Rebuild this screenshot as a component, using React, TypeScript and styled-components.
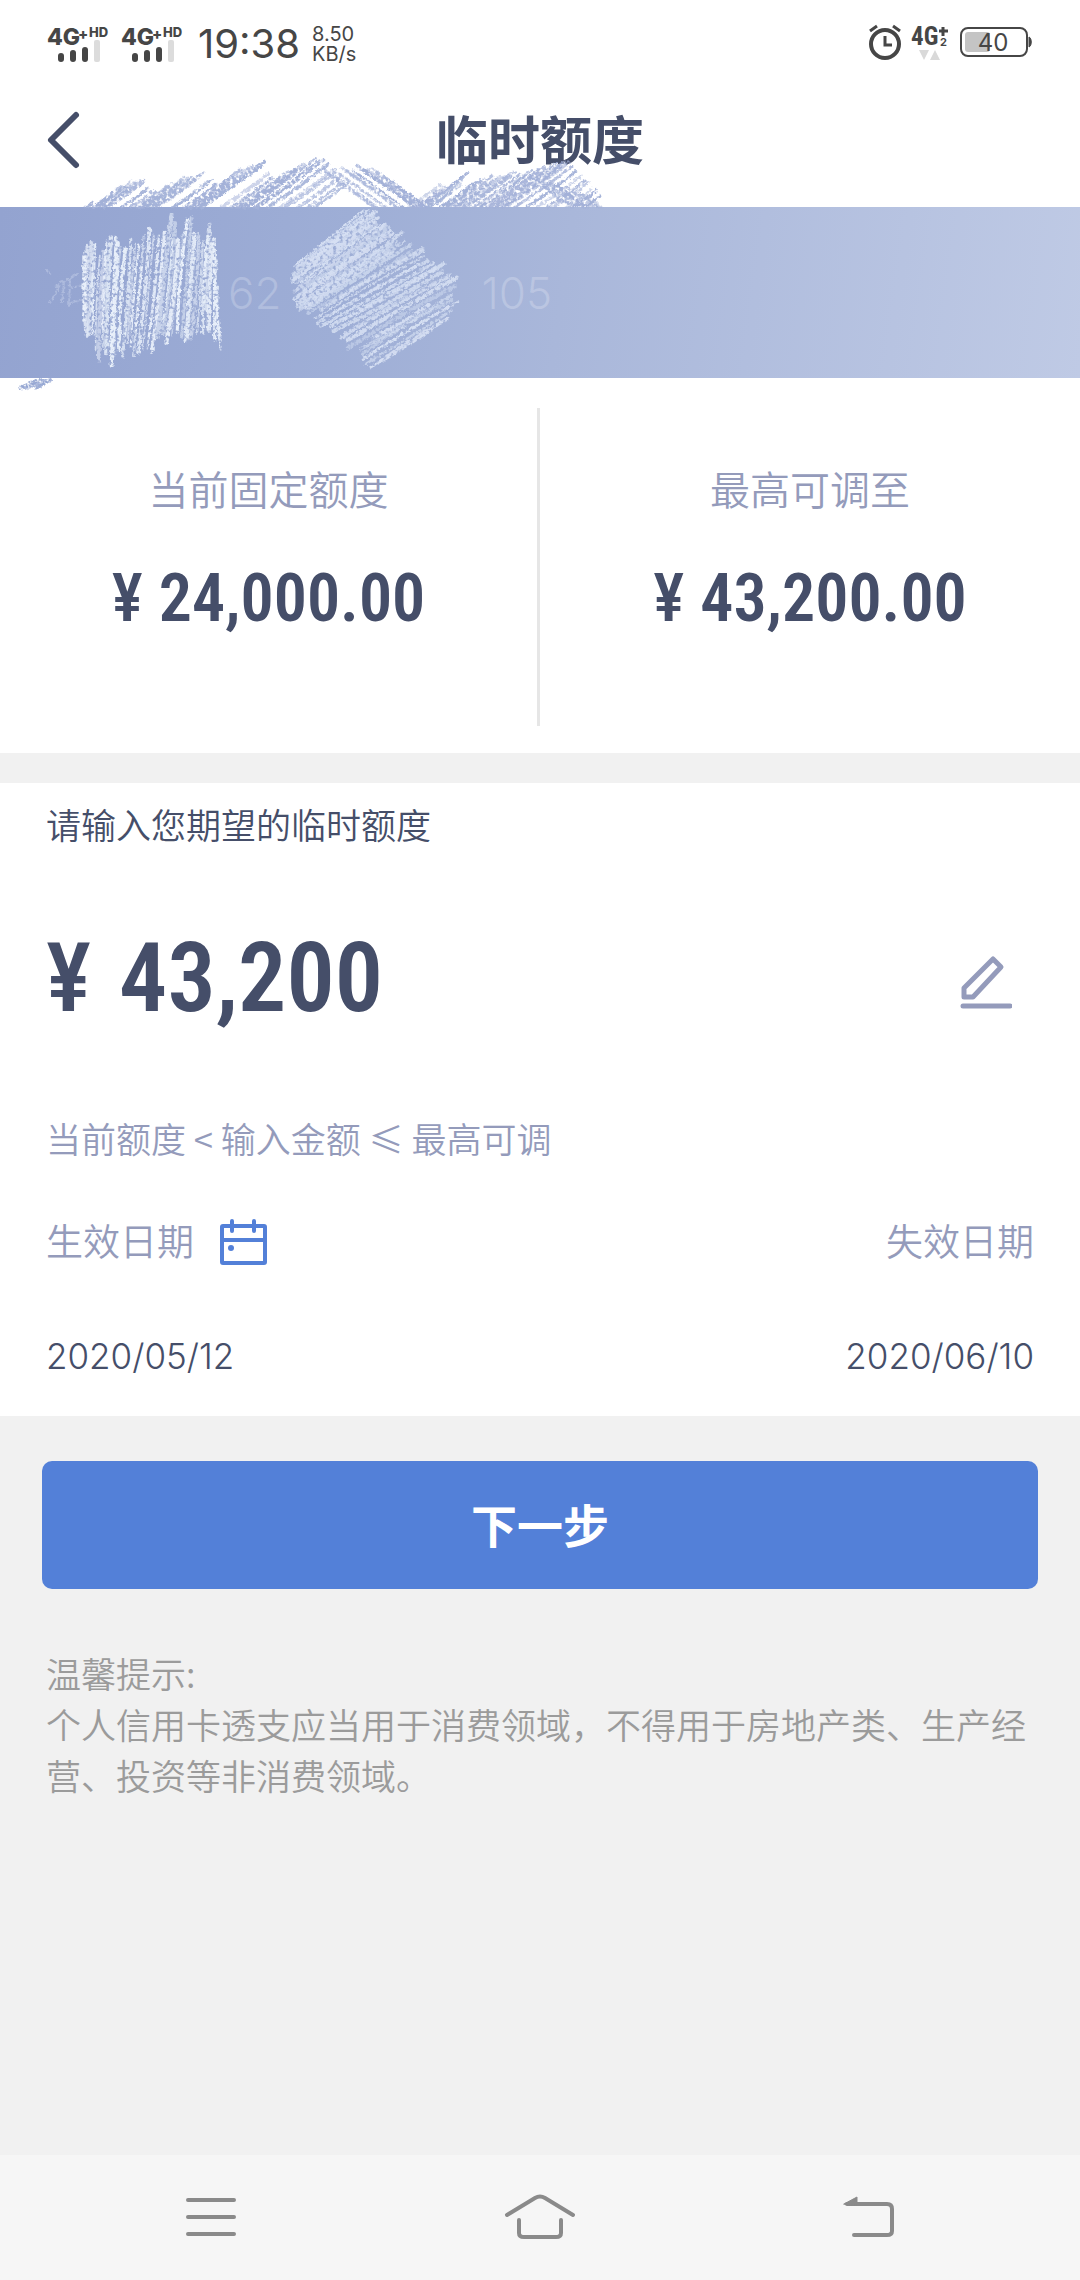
import React from "react";
import styled, { createGlobalStyle } from "styled-components";

const sans = '"Noto Sans CJK SC", sans-serif';
const latin = 'Inter, "Noto Sans CJK SC", sans-serif';
const narrow = '"Liberation Sans Narrow", "Roboto Condensed", "Roboto", sans-serif';

const color = {
  ink: "#454e69",
  mute: "#949bbb",
  blue: "#5380d8",
  status: "#464646",
  page: "#f1f1f1",
  tip: "#9b9b9b",
  nav: "#8a8a8a",
};

const GlobalStyle = createGlobalStyle`
  * { box-sizing: border-box; }
  body { margin: 0; background: ${color.page}; font-family: ${sans}; color: ${color.ink}; }
  h1, p, dl, dt, dd { margin: 0; }
  button { border: 0; padding: 0; background: none; font: inherit; color: inherit; cursor: pointer; }
  svg { display: block; flex: none; }
`;

const Screen = styled.div`
  min-height: 100vh;
  display: flex;
  flex-direction: column;
`;

const StatusBar = styled.div`
  display: flex;
  justify-content: space-between;
  align-items: center;
  height: 84px;
  padding: 4px 48px 0 46px;
  background: #fff;
  color: ${color.status};
  font-family: ${latin};
`;

const StatusGroup = styled.div`
  display: flex;
  align-items: center;
  gap: 8px;
`;

const Clock = styled.span`
  padding: 0 4px;
  font-size: 40px;
  line-height: 48px;
`;

const Speed = styled.span`
  font-size: 20px;
  line-height: 20px;
`;

const Header = styled.header`
  display: grid;
  grid-template-columns: 80px 1fr 80px;
  align-items: center;
  height: 123px;
  padding: 0 40px 12px;
  background: #fff;
`;

const Title = styled.h1`
  padding-bottom: 4px;
  text-align: center;
  font-size: 52px;
  line-height: 64px;
  font-weight: 700;
`;

const Banner = styled.section`
  position: relative;
  display: flex;
  align-items: center;
  height: 171px;
  background: linear-gradient(98deg, #93a3d0 0%, #9eaed6 32%, #a9b7da 52%, #bfcae5 100%);
`;

const Scribbles = styled.svg`
  position: absolute;
  left: 0;
  top: -67px;
  pointer-events: none;
`;

const CardNumber = styled.p`
  display: flex;
  gap: 200px;
  padding-left: 228px;
  font-family: ${latin};
  font-size: 44px;
  line-height: 48px;
  font-weight: 300;
  color: rgba(255, 255, 255, 0.22);
`;

const Limits = styled.dl`
  display: grid;
  grid-template-columns: 1fr 1fr;
  padding: 30px 0 27px;
  background: #fff;
`;

const Limit = styled.div`
  height: 318px;
  padding-top: 50px;
  text-align: center;
  &:first-child { border-right: 3px solid #e6e6e6; }
`;

const LimitLabel = styled.dt`
  font-size: 40px;
  line-height: 60px;
  font-weight: 350;
  color: ${color.mute};
`;

const LimitValue = styled.dd`
  display: flex;
  justify-content: center;
  align-items: center;
  gap: 16px;
  margin-top: 45px;
  font-family: ${narrow};
  font-size: 66px;
  line-height: 72px;
  font-weight: 600;
`;

const Yen = styled.span`
  font-weight: 500;
`;

const Form = styled.section`
  margin-top: 30px;
  padding: 19px 46px 36px;
  background: #fff;
`;

const Prompt = styled.label`
  display: block;
  font-size: 35px;
  line-height: 44px;
  font-weight: 350;
`;

const AmountRow = styled.div`
  display: flex;
  align-items: center;
  justify-content: space-between;
  height: 120px;
  margin-top: 72px;
  padding-right: 22px;
`;

const AmountBox = styled.div`
  display: flex;
  align-items: center;
  gap: 28px;
  flex: 1;
  min-width: 0;
  font-family: ${narrow};
  font-size: 96px;
  line-height: 120px;
`;

const AmountInput = styled.input`
  width: 100%;
  min-width: 0;
  flex: 1;
  height: 120px;
  border: 0;
  padding: 0;
  outline: 0;
  background: none;
  color: ${color.ink};
  font: inherit;
  font-weight: 600;
`;

const Rule = styled.p`
  margin-top: 76px;
  font-size: 35px;
  line-height: 48px;
  font-weight: 350;
  color: ${color.mute};
`;

const Dates = styled.dl`
  display: flex;
  justify-content: space-between;
  margin-top: 50px;
`;

const DateItem = styled.div<{ $end?: boolean }>`
  display: flex;
  flex-direction: column;
  align-items: ${(p) => (p.$end ? "flex-end" : "flex-start")};
  gap: 64px;
`;

const DateLabel = styled.dt`
  display: flex;
  align-items: center;
  gap: 25px;
  font-size: 37px;
  line-height: 56px;
  font-weight: 350;
  color: ${color.mute};
`;

const DateValue = styled.dd`
  font-family: ${latin};
  font-size: 35px;
  line-height: 48px;
  font-weight: 300;
`;

const Actions = styled.div`
  padding: 45px 42px 0;
`;

const NextButton = styled.button`
  && {
    width: 100%;
    height: 128px;
    padding-bottom: 4px;
    border-radius: 10px;
    background: ${color.blue};
    color: #fff;
    font-size: 46px;
    line-height: 64px;
    font-weight: 700;
  }
`;

const Tips = styled.section`
  flex: 1;
  padding: 58px 46px;
  font-size: 35px;
  line-height: 51px;
  font-weight: 350;
  color: ${color.tip};
`;

const NavBar = styled.nav`
  display: grid;
  grid-template-columns: 1fr 1fr 1fr;
  height: 125px;
  padding: 0 46px 2px;
  background: #f6f6f6;
`;

const NavButton = styled.button`
  display: flex;
  align-items: center;
  justify-content: center;
`;

function Signal() {
  return (
    <svg width="66" height="44" viewBox="0 0 66 44" fill={color.status} fontFamily="Inter, sans-serif" fontWeight="800" role="img" aria-label="4G+ HD">
      <text x="1" y="23" fontSize="23">4G</text>
      <text x="32" y="18" fontSize="15">+</text>
      <text x="43" y="15" fontSize="13">HD</text>
      <rect x="12" y="31" width="6" height="9" rx="3" />
      <rect x="24" y="28" width="6" height="12" rx="3" />
      <rect x="36" y="25" width="6" height="15" rx="3" />
      <rect x="48" y="18" width="6" height="22" rx="2" fill="#dcdcdc" />
    </svg>
  );
}

function Alarm() {
  return (
    <svg width="34" height="40" viewBox="0 0 34 40" fill="none" stroke={color.status} role="img" aria-label="闹钟">
      <circle cx="17" cy="20" r="14" strokeWidth="4" />
      <path d="M17 12v9h7" strokeWidth="3" />
      <path d="M2 7l7-5M32 7l-7-5" strokeWidth="3" />
    </svg>
  );
}

function Network() {
  return (
    <svg width="42" height="44" viewBox="0 0 42 44" fill={color.status} fontWeight="700" role="img" aria-label="4G+ 2">
      <text x="1" y="23" fontSize="25" fontFamily="Roboto Condensed, Roboto, sans-serif">4G</text>
      <path d="M29 9h9M33 5v9" stroke={color.status} strokeWidth="3" />
      <text x="30" y="24" fontSize="11" fontFamily="Inter, sans-serif">2</text>
      <path d="M9 28h10l-5 10zM20 38h10l-5-10z" fill="#d9d9d9" />
    </svg>
  );
}

function Battery() {
  return (
    <svg width="72" height="36" viewBox="0 0 72 36" fill="none" role="img" aria-label="电量 40">
      <rect x="1" y="2" width="66" height="28" rx="7" stroke={color.status} strokeWidth="2" />
      <rect x="5" y="6" width="25" height="20" rx="3" fill="#c4c4c4" />
      <path d="M69 11c3 1 3 9 0 10z" fill={color.status} stroke={color.status} strokeWidth="1" />
      <text x="33" y="25" fontSize="24" fontFamily="Inter, sans-serif" textAnchor="middle" fill={color.status}>40</text>
    </svg>
  );
}

type Point = [number, number];
type Stroke = { d: string; w: number; o: number };

function noise(seed: number) {
  let s = seed;
  return () => {
    s = (s * 1664525 + 1013904223) % 4294967296;
    return s / 4294967296;
  };
}

/* Height of a left-to-right outline at x. */
function edge(points: Point[], x: number) {
  for (let i = 1; i < points.length; i++) {
    const [x0, y0] = points[i - 1];
    const [x1, y1] = points[i];
    if (x <= x1) return y0 + ((y1 - y0) * (x - x0)) / (x1 - x0);
  }
  return points[points.length - 1][1];
}

/* Point at the fraction t of an outline's segments. */
function along(points: Point[], t: number): Point {
  const p = t * (points.length - 1);
  const i = Math.min(Math.floor(p), points.length - 2);
  const f = p - i;
  const [x0, y0] = points[i];
  const [x1, y1] = points[i + 1];
  return [x0 + (x1 - x0) * f, y0 + (y1 - y0) * f];
}

/* Chalk strokes from one outline to the other, each wobbling a little on its way. */
function hatch(seed: number, count: number, from: Point[], to: Point[], ragged: number): Stroke[] {
  const rnd = noise(seed);
  return Array.from({ length: count }, (_, i) => {
    const t = i / (count - 1);
    const [ax, ay] = along(from, t);
    const [bx, by] = along(to, t);
    const s = (rnd() * ragged) / 100;
    const e = 1 - (rnd() * ragged) / 100;
    const x0 = ax + (bx - ax) * s;
    const y0 = ay + (by - ay) * s;
    const x1 = ax + (bx - ax) * e;
    const y1 = ay + (by - ay) * e;
    const mx = (x0 + x1) / 2 + (rnd() - 0.5) * 8;
    const my = (y0 + y1) / 2 + (rnd() - 0.5) * 8;
    return {
      d: `M${x0.toFixed(1)} ${y0.toFixed(1)}Q${mx.toFixed(1)} ${my.toFixed(1)} ${x1.toFixed(1)} ${y1.toFixed(1)}`,
      w: 1.5 + rnd() * 3,
      o: 0.5 + rnd() * 0.5,
    };
  });
}

const nameTop: Point[] = [[84, 108], [93, 92], [104, 104], [112, 84], [124, 96], [136, 88], [147, 78], [158, 88], [172, 73], [182, 84], [191, 72], [200, 88], [212, 82], [216, 110]];
const nameFoot: Point[] = [[84, 190], [90, 206], [98, 222], [106, 230], [116, 226], [126, 224], [134, 220], [146, 212], [156, 214], [168, 206], [180, 210], [192, 200], [206, 198], [221, 212]];
const nameMarks = [...hatch(7, 32, nameTop, nameFoot, 16), ...hatch(23, 12, nameTop, nameFoot, 36)];

const numberLeft: Point[] = [[292, 128], [290, 144], [292, 158], [298, 168], [308, 180], [324, 194], [347, 216], [366, 230]];
const numberRight: Point[] = [[364, 70], [386, 72], [392, 86], [410, 94], [430, 110], [452, 124], [462, 148], [458, 172]];
const numberMarks = [...hatch(19, 30, numberLeft, numberRight, 12), ...hatch(31, 14, numberLeft, numberRight, 30)];

const bannerTop = 67;

/* Slanted strokes standing on the banner's top edge. */
function fringe(seed: number, x0: number, x1: number, top: Point[], step: number, dir: number): Stroke[] {
  const rnd = noise(seed);
  const out: Stroke[] = [];
  for (let x = x0; x < x1; x += step) {
    const y = edge(top, x) + rnd() * 9;
    const run = (bannerTop - y) * 1.4 * dir;
    out.push({
      d: `M${x.toFixed(1)} ${y.toFixed(1)}Q${(x - run / 2 + 2).toFixed(1)} ${((y + bannerTop) / 2 + 1).toFixed(1)} ${(x - run).toFixed(1)} ${bannerTop}`,
      w: 2 + rnd() * 2,
      o: 0.5 + rnd() * 0.5,
    });
  }
  return out;
}

const headerMarks = [
  ...fringe(3, 92, 350, [[92, 60], [128, 41], [142, 39], [154, 52], [198, 29], [204, 30], [216, 44], [256, 20], [264, 22], [278, 36], [318, 16], [328, 17], [350, 40]], 4, 1),
  ...fringe(5, 322, 412, [[322, 26], [356, 22], [376, 28], [412, 56]], 5, -1),
  ...fringe(11, 432, 604, [[432, 60], [440, 44], [450, 46], [468, 32], [476, 42], [504, 29], [524, 32], [560, 18], [572, 24], [584, 34], [592, 48], [606, 54]], 4, 1),
  ...fringe(13, 530, 590, [[530, 34], [584, 50], [590, 58]], 6, -1),
];

const cornerMarks: Stroke[] = [
  { d: "M20 248L42 239", w: 4, o: 0.9 },
  { d: "M24 248L50 240", w: 4, o: 0.8 },
  { d: "M36 248L49 241", w: 3, o: 0.9 },
];

const glyphMarks: Stroke[] = [
  { d: "M46 130l5 4M50 163l12-22M56 146l22-12M64 142l-2 20M70 140l-1 26M68 164l12-4M72 148l10-3", w: 2, o: 0.3 },
];

function Marks({ list, stroke }: { list: Stroke[]; stroke: string }) {
  return (
    <g stroke={stroke} fill="none" strokeLinecap="round" filter="url(#chalk)">
      {list.map((s, i) => (
        <path key={i} d={s.d} strokeWidth={s.w} opacity={s.o} />
      ))}
    </g>
  );
}

function BannerScribbles() {
  return (
    <Scribbles width="640" height="260" viewBox="0 0 640 260" aria-hidden="true">
      <defs>
        <filter id="chalk" x="0" y="0" width="640" height="260" filterUnits="userSpaceOnUse">
          <feTurbulence type="fractalNoise" baseFrequency="0.3" numOctaves="2" seed="4" result="grain" />
          <feDisplacementMap in="SourceGraphic" in2="grain" scale="4" xChannelSelector="R" yChannelSelector="G" result="rough" />
          <feColorMatrix in="grain" type="matrix" values="0 0 0 0 0  0 0 0 0 0  0 0 0 0 0  0 0 0 -4 3" result="holes" />
          <feComposite in="rough" in2="holes" operator="in" />
        </filter>
      </defs>
      <Marks list={headerMarks} stroke="#a3b1d8" />
      <Marks list={cornerMarks} stroke="#94a5d2" />
      <Marks list={glyphMarks} stroke="#e4ebf8" />
      <Marks list={nameMarks} stroke="#eaf1fb" />
      <Marks list={numberMarks} stroke="#d6e0f3" />
    </Scribbles>
  );
}

export default function App() {
  return (
    <Screen>
      <GlobalStyle />
      <StatusBar>
        <StatusGroup>
          <Signal />
          <Signal />
          <Clock>19:38</Clock>
          <Speed>8.50<br />KB/s</Speed>
        </StatusGroup>
        <StatusGroup>
          <Alarm />
          <Network />
          <Battery />
        </StatusGroup>
      </StatusBar>
      <Header>
        <button type="button" aria-label="返回">
          <svg width="48" height="60" viewBox="0 0 48 60" fill="none" stroke={color.ink} strokeWidth="6" strokeLinecap="round" strokeLinejoin="round">
            <path d="M36 5L11 30l25 25" />
          </svg>
        </button>
        <Title>临时额度</Title>
      </Header>
      <Banner>
        <CardNumber>
          <span>62</span>
          <span>105</span>
        </CardNumber>
        <BannerScribbles />
      </Banner>
      <Limits>
        <Limit>
          <LimitLabel>当前固定额度</LimitLabel>
          <LimitValue><Yen>¥</Yen><span>24,000.00</span></LimitValue>
        </Limit>
        <Limit>
          <LimitLabel>最高可调至</LimitLabel>
          <LimitValue><Yen>¥</Yen><span>43,200.00</span></LimitValue>
        </Limit>
      </Limits>
      <Form>
        <Prompt htmlFor="amount">请输入您期望的临时额度</Prompt>
        <AmountRow>
          <AmountBox>
            <Yen>¥</Yen>
            <AmountInput id="amount" defaultValue="43,200" inputMode="numeric" />
          </AmountBox>
          <button type="button" aria-label="编辑">
            <svg width="52" height="64" viewBox="0 0 52 64" fill="none" stroke={color.mute} strokeWidth="5">
              <path d="M4 51V42L33 13l8 8L13 51z" strokeLinejoin="round" />
              <path d="M3 60h47" strokeLinecap="round" />
            </svg>
          </button>
        </AmountRow>
        <Rule>当前额度 &lt; 输入金额 ≤ 最高可调</Rule>
        <Dates>
          <DateItem>
            <DateLabel>
              生效日期
              <button type="button" aria-label="选择生效日期">
                <svg width="50" height="56" viewBox="0 0 50 56" fill="none" stroke={color.blue} strokeWidth="4" strokeLinecap="round">
                  <rect x="3" y="14" width="43" height="37" rx="1" />
                  <path d="M3 28h43M13 9v10M35 9v10" />
                  <circle cx="12" cy="36" r="3" fill={color.blue} stroke="none" />
                </svg>
              </button>
            </DateLabel>
            <DateValue>2020/05/12</DateValue>
          </DateItem>
          <DateItem $end>
            <DateLabel>失效日期</DateLabel>
            <DateValue>2020/06/10</DateValue>
          </DateItem>
        </Dates>
      </Form>
      <Actions>
        <NextButton type="button">下一步</NextButton>
      </Actions>
      <Tips>
        <p>温馨提示:</p>
        <p>个人信用卡透支应当用于消费领域，不得用于房地产类、生产经营、投资等非消费领域。</p>
      </Tips>
      <NavBar aria-label="系统导航">
        <NavButton type="button" aria-label="菜单">
          <svg width="52" height="42" viewBox="0 0 52 42" stroke={color.nav} strokeWidth="4" strokeLinecap="round">
            <path d="M3 4h46M3 21h46M3 38h46" />
          </svg>
        </NavButton>
        <NavButton type="button" aria-label="主页">
          <svg width="72" height="46" viewBox="0 0 72 46" fill="none" stroke={color.nav} strokeWidth="4" strokeLinecap="round">
            <path d="M3 21L31 4q5-3 10 0l28 17M15 26v13q0 4 5 4h32q5 0 5-4V26" />
          </svg>
        </NavButton>
        <NavButton type="button" aria-label="返回上一级">
          <svg width="52" height="42" viewBox="0 0 52 42" fill="none" stroke={color.nav} strokeWidth="4" strokeLinecap="round" strokeLinejoin="round">
            <path d="M4 8h40q5 0 5 5v22q0 4-5 4H11" />
            <path d="M1 8L14 1v8z" fill={color.nav} strokeWidth="1" />
          </svg>
        </NavButton>
      </NavBar>
    </Screen>
  );
}
